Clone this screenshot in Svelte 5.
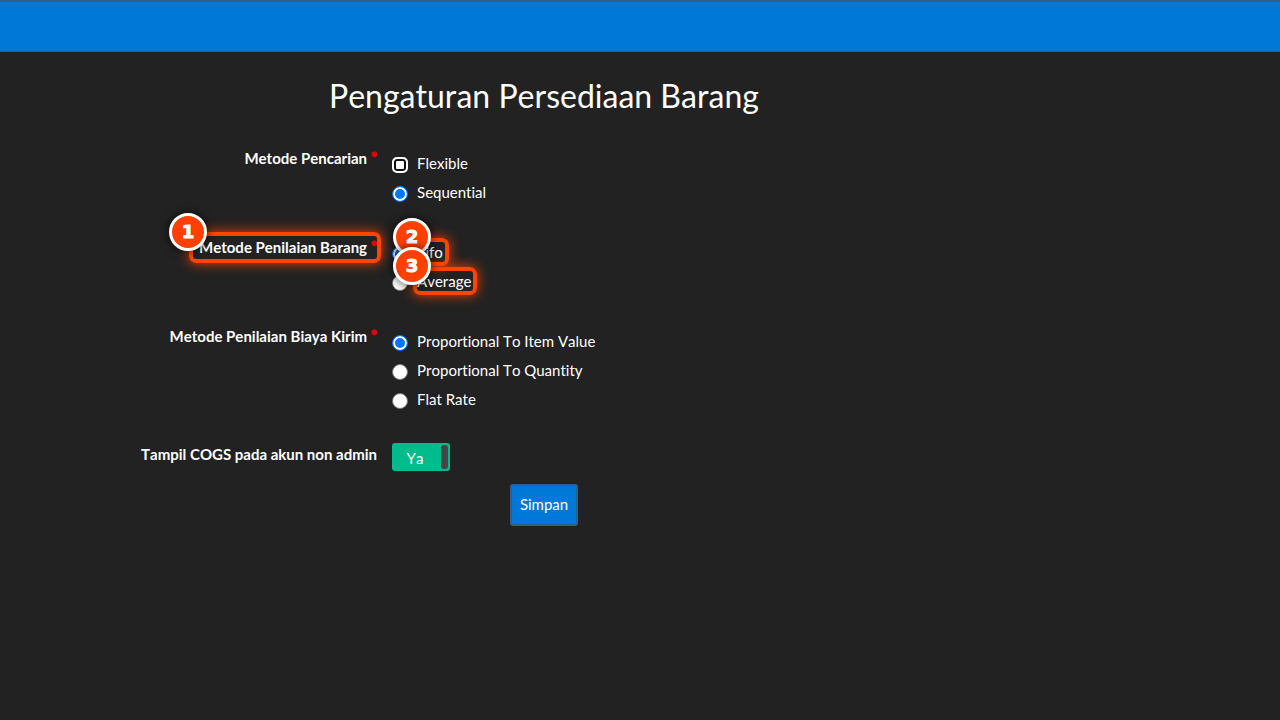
<svelte:head>
  <title>Pengaturan Persediaan Barang</title>
</svelte:head>

<script>
  let search = "sequential";
  let valuation = "fifo";
  let shipping = "value";
  let showCogs = true;
</script>

<div class="page">
  <header class="topbar"></header>

  <form class="settings" on:submit|preventDefault>
    <h1>Pengaturan Persediaan Barang</h1>

    <div class="row" role="radiogroup" aria-labelledby="search-label">
      <div class="name"><span id="search-label">Metode Pencarian<sup>*</sup></span></div>
      <div class="options">
        <label><input class="focused" type="radio" name="search" value="flexible" bind:group={search} /><span>Flexible</span></label>
        <label><input type="radio" name="search" value="sequential" bind:group={search} /><span>Sequential</span></label>
      </div>
    </div>

    <div class="row" role="radiogroup" aria-labelledby="valuation-label">
      <div class="name">
        <span class="marked" id="valuation-label">Metode Penilaian Barang<sup>*</sup><b class="badge">1</b></span>
      </div>
      <div class="options">
        <label><input type="radio" name="valuation" value="fifo" bind:group={valuation} /><span class="marked">Fifo<b class="badge">2</b></span></label>
        <label><input type="radio" name="valuation" value="average" bind:group={valuation} /><span class="marked">Average<b class="badge">3</b></span></label>
      </div>
    </div>

    <div class="row" role="radiogroup" aria-labelledby="shipping-label">
      <div class="name"><span id="shipping-label">Metode Penilaian Biaya Kirim<sup>*</sup></span></div>
      <div class="options">
        <label><input type="radio" name="shipping" value="value" bind:group={shipping} /><span>Proportional To Item Value</span></label>
        <label><input type="radio" name="shipping" value="quantity" bind:group={shipping} /><span>Proportional To Quantity</span></label>
        <label><input type="radio" name="shipping" value="flat" bind:group={shipping} /><span>Flat Rate</span></label>
      </div>
    </div>

    <div class="row last">
      <div class="name"><label for="cogs">Tampil COGS pada akun non admin</label></div>
      <div class="switch" class:off={!showCogs}>
        <input type="checkbox" id="cogs" bind:checked={showCogs} />
        <span class="state">{showCogs ? "Ya" : "Tidak"}</span>
        <span class="handle"></span>
      </div>
    </div>

    <button type="submit">Simpan</button>
  </form>
</div>

<style>
:global(body) {
  margin: 0;
  background: #222222;
}
.page {
  min-height: 100vh;
  background: #222222;
  color: #ffffff;
  font-family: Lato, sans-serif;
  font-size: 15px;
  font-kerning: none;
  font-variant-ligatures: none;
}
.topbar {
  box-sizing: border-box;
  height: 52px;
  background: #0078d7;
  border-top: 2px solid #2f5f8a;
  border-bottom: 1px solid #2f5f8a;
}
.settings {
  width: 85%;
  display: flex;
  flex-direction: column;
}
h1 {
  margin: 24px 0 28px;
  font-size: 32px;
  line-height: 40px;
  font-weight: 400;
  text-align: center;
}
.row {
  display: grid;
  grid-template-columns: 377fr 696fr;
  column-gap: 15px;
  margin-bottom: 31px;
}
.name {
  padding-top: 4px;
  line-height: 20px;
  font-weight: 700;
  text-align: right;
}
sup {
  margin-left: 4px;
  color: #ee0000;
  font-size: 14px;
  font-weight: 900;
  line-height: 0;
  vertical-align: 2px;
  -webkit-text-stroke: 1px #ee0000;
}
.options {
  display: flex;
  flex-direction: column;
  align-items: flex-start;
  padding-top: 5px;
  margin-bottom: -5px;
}
.options label {
  display: flex;
  align-items: flex-start;
  gap: 9px;
  height: 29px;
  line-height: 29px;
}
.options label span {
  line-height: 28px;
}
.options input {
  appearance: none;
  box-sizing: border-box;
  flex: none;
  width: 16px;
  height: 16px;
  margin: 8px 0 0;
  border: 1px solid #767676;
  border-radius: 50%;
  background: #ffffff;
}
.options input:checked {
  border: 1px solid #0075ff;
  background: #0075ff;
  box-shadow: inset 0 0 0 2px #ffffff;
}
.options input.focused {
  border: 2px solid #ffffff;
  border-radius: 5px;
  background: #ffffff;
  box-shadow: inset 0 0 0 2px #101010;
}
.marked {
  position: relative;
}
.marked::before {
  content: "";
  position: absolute;
  border: 4px solid #ff4500;
  border-radius: 7px;
  box-shadow: 0 0 12px 1px rgba(255, 69, 0, 0.8);
}
.name .marked::before {
  inset: -6px -4px -7px -10px;
}
.options .marked::before {
  inset: 0 -6px 0 -4px;
}
.badge {
  position: absolute;
  top: -25px;
  left: -24px;
  box-sizing: border-box;
  width: 38px;
  height: 38px;
  border: 3px solid #ffffff;
  border-radius: 50%;
  background: #ff4000;
  box-shadow: 0 0 8px 1px rgba(0, 0, 0, 0.6);
  color: #ffffff;
  font: 700 18px/32px "DejaVu Sans", sans-serif;
  text-align: center;
  -webkit-text-stroke: 1px #ffffff;
}
.name .badge {
  left: -30px;
}
.options .badge {
  top: -20px;
}
.last {
  margin-bottom: 13px;
}
.switch {
  position: relative;
  box-sizing: border-box;
  display: flex;
  align-items: center;
  justify-content: space-between;
  width: 58px;
  height: 28px;
  margin-top: 3px;
  padding: 2px;
  border-radius: 3px;
  background: #00bc8c;
}
.switch.off {
  background: #444444;
}
.switch input {
  position: absolute;
  inset: 0;
  width: 100%;
  height: 100%;
  margin: 0;
  opacity: 0;
  cursor: pointer;
}
.state {
  flex: 1;
  padding: 2px 5px 0 0;
  text-align: center;
}
.handle {
  width: 7px;
  height: 24px;
  border-radius: 3px;
  background: #444444;
}
button {
  align-self: center;
  padding: 0 8px 2px;
  height: 42px;
  border: 2px solid #2f5f8a;
  border-radius: 3px;
  background: #0078d7;
  color: #ffffff;
  font-family: inherit;
  font-size: 15px;
  cursor: pointer;
}
</style>
